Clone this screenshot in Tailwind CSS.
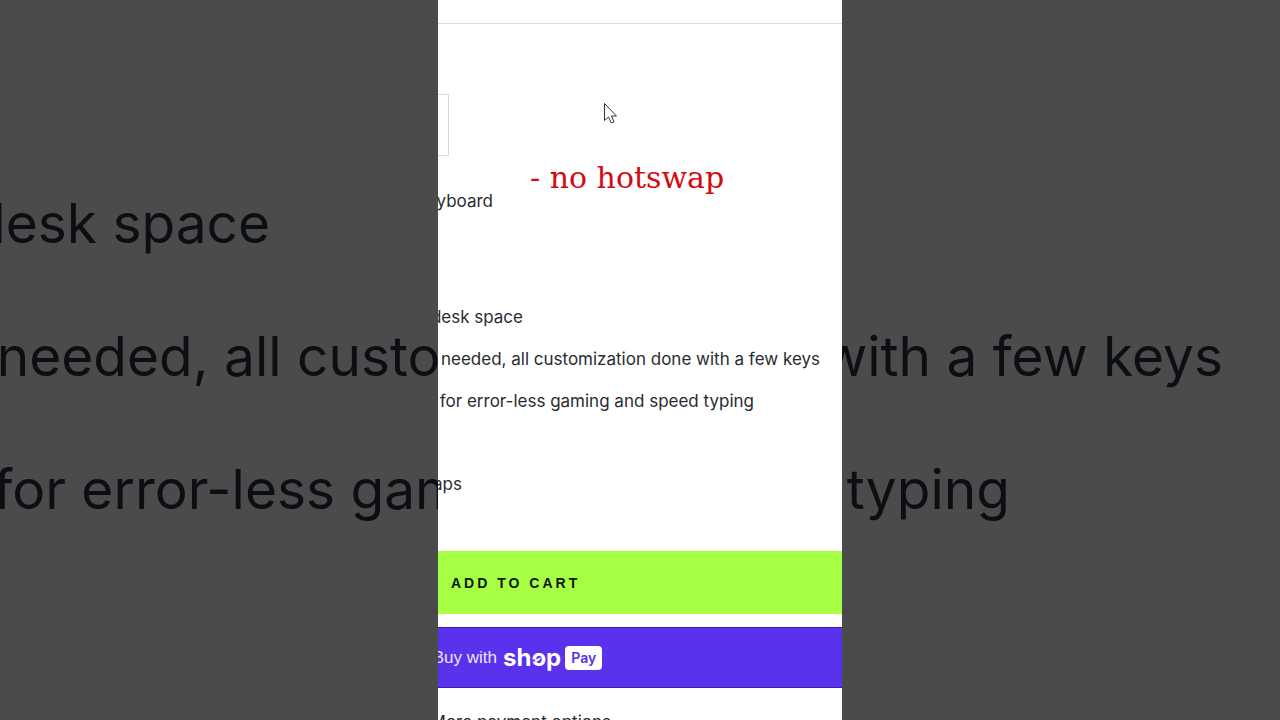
<!DOCTYPE html>
<html lang="en">
<head>
<meta charset="utf-8">
<title>Product page</title>
<script src="https://cdn.jsdelivr.net/npm/@tailwindcss/browser@4"></script>
</head>
<body class="h-screen overflow-hidden bg-[#4b4b4b] font-['Inter',Arial,sans-serif]">
<div class="grid h-full overflow-hidden">
  <!-- Enlarged, dimmed backdrop -->
  <div aria-hidden="true" class="col-start-1 row-start-1 overflow-hidden whitespace-nowrap pt-[157px] text-[55px] leading-[133px] text-[#0b0f14]">
    <p class="flex w-[270px] justify-end">desk space</p>
    <p class="flex w-[1223px] justify-end">needed, all customization done with a few keys</p>
    <p class="flex w-[1010px] justify-end">for error-less gaming and speed typing</p>
  </div>

  <!-- Page column -->
  <main class="relative col-start-1 row-start-1 flex w-[404px] flex-col justify-self-center overflow-hidden bg-white text-[17px] whitespace-nowrap text-[#272c31]">
    <div class="h-6 shrink-0 border-b border-[#dcdcdc]"></div>
    <div class="mt-[70px] h-[62px] w-[11px] shrink-0 border border-l-0 border-[#dadada]"></div>
    <ul class="mt-6 shrink-0 leading-[42px]">
      <li class="flex w-[55px] justify-end">keyboard</li>
      <li class="mt-[74px] flex w-[85px] justify-end">desk space</li>
      <li class="flex w-[382px] justify-end">needed, all customization done with a few keys</li>
      <li class="flex w-[316px] justify-end">for error-less gaming and speed typing</li>
      <li class="mt-[41px] flex w-[24px] justify-end">keycaps</li>
    </ul>
    <button class="mt-[46px] flex h-[63px] shrink-0 items-center bg-[#a6ff42] pl-[13px] font-['Liberation_Sans',Arial,sans-serif] text-sm font-bold tracking-[3px] text-[#10180c]">ADD TO CART</button>
    <button class="mt-[13px] flex h-[61px] shrink-0 items-center border-y border-[#3b1fae] bg-[#5a31ec] text-white" aria-label="Buy with shop Pay">
      <span class="flex w-[59px] justify-end font-['Liberation_Sans',Arial,sans-serif] text-[17px] text-[#eee6ff]">Buy with</span>
      <span class="relative ml-1.5 text-2xl font-bold">shop
        <svg class="absolute left-[29px] top-[10px] h-[18px] w-4" viewBox="0 0 16 18" fill="none"><path d="M0 8.5H4.5" stroke="#5a31ec" stroke-width="2"/><path d="M3 8.5Q6 9 8 6" stroke="#fff" stroke-width="2"/></svg>
      </span>
      <span class="ml-1 flex h-6 items-center rounded-[4px] bg-white px-1.5 text-sm font-semibold text-[#5a31ec]">Pay</span>
    </button>
    <a href="#" class="mt-[22px] flex w-[173px] shrink-0 justify-end leading-6">More payment options</a>
    <p class="absolute top-[160px] left-[92px] font-['DejaVu_Serif',serif] text-[30px] leading-9 text-[#d40a10]">- no hotswap</p>
    <svg class="absolute top-[102px] left-[165px] h-[23px] w-[15px]" viewBox="0 0 15 23" fill="#fff" stroke="#333" stroke-width="1"><path d="M1.5 1.5V18.5L5.5 15L8.3 21L11 19.8L8.4 14H13.5Z"/></svg>
  </main>
</div>
</body>
</html>
